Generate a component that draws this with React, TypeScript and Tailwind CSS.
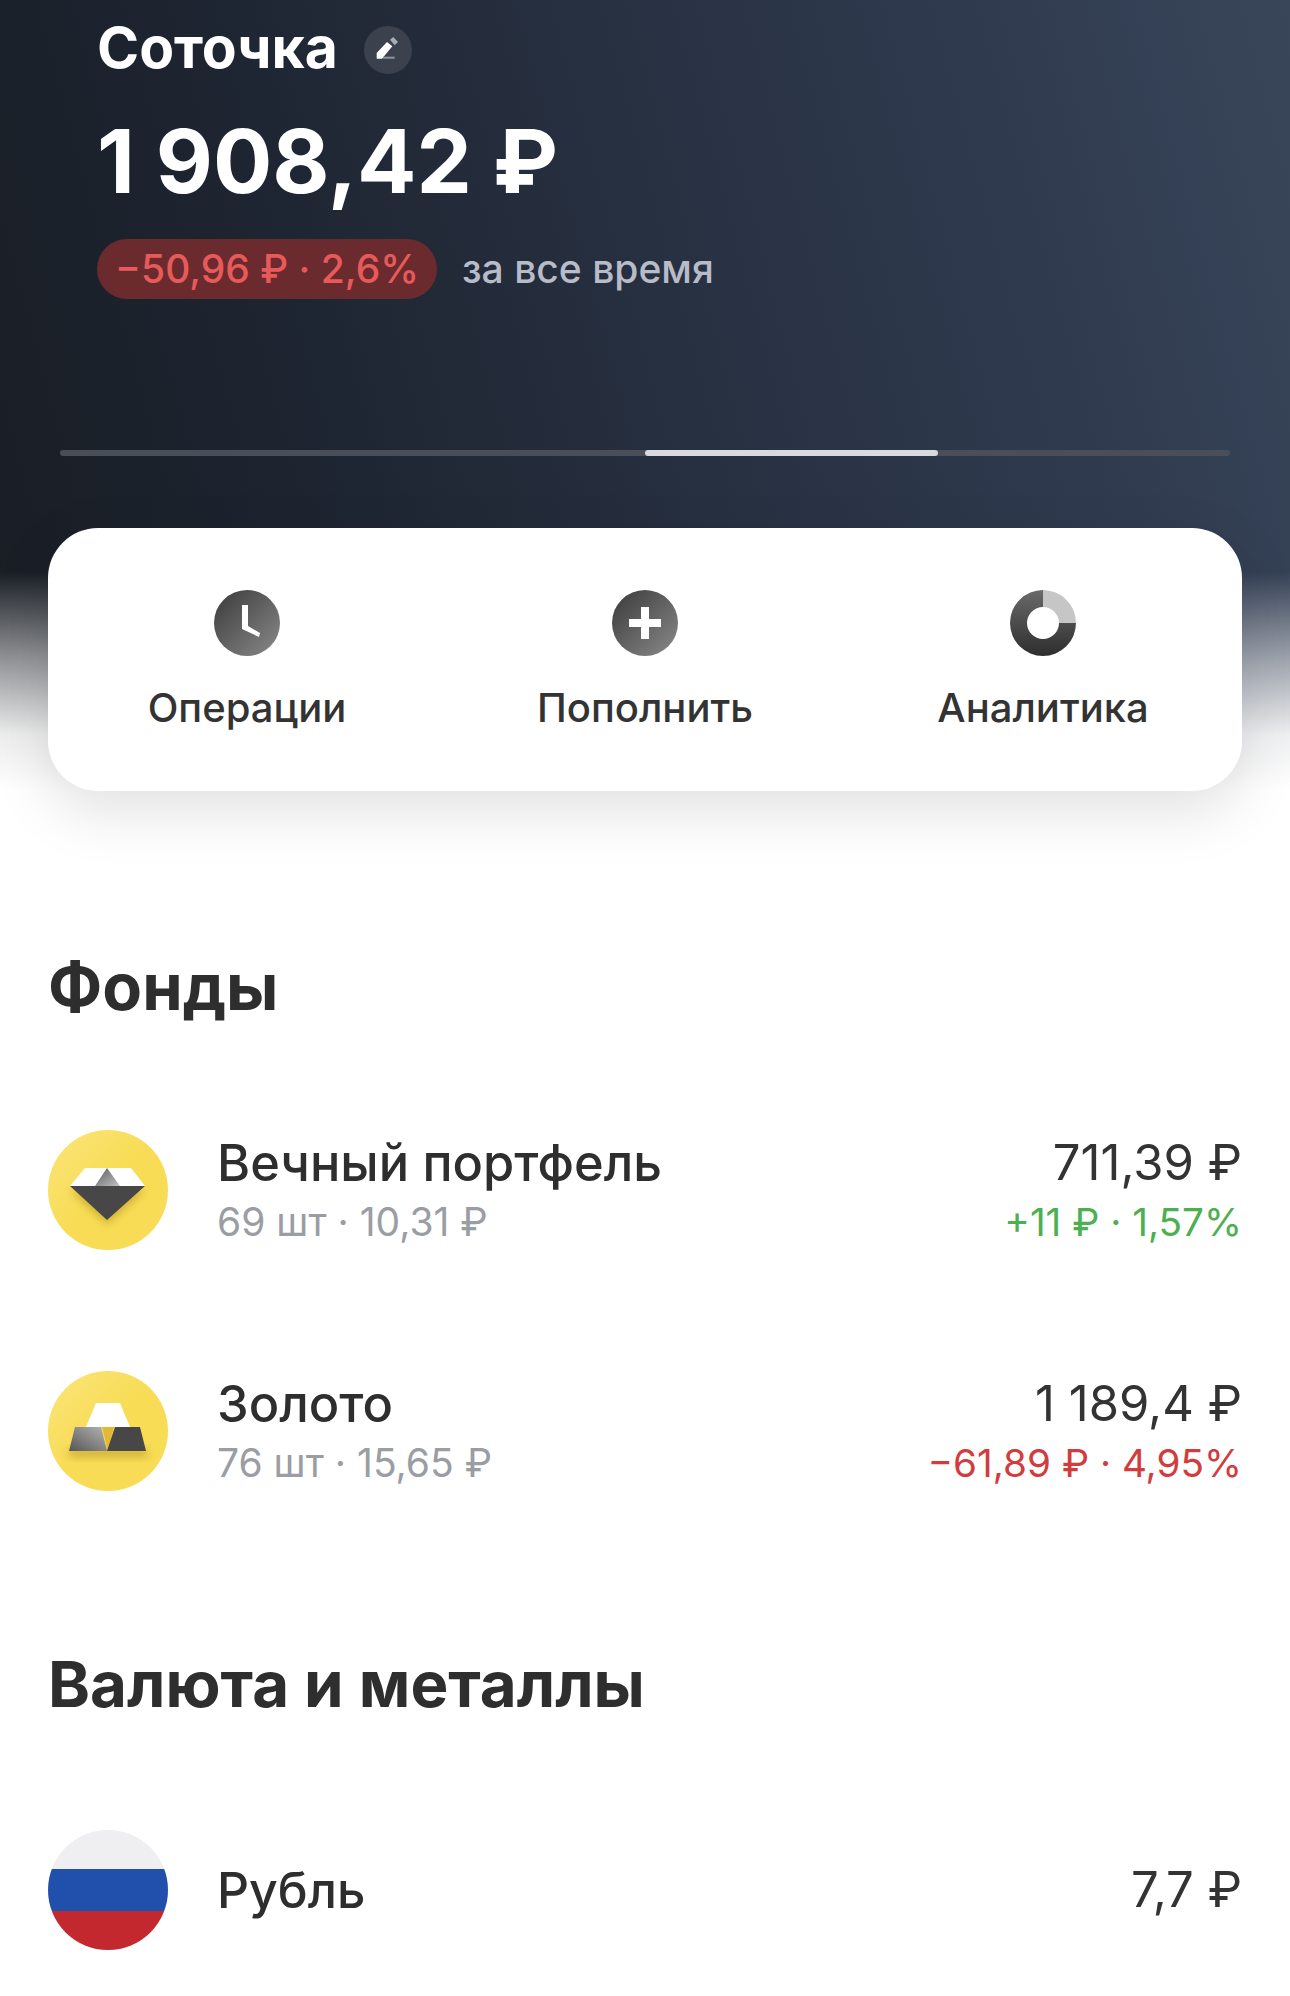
const font = "[font-family:Inter,'Noto_Sans',sans-serif]";

function ClockIcon() {
  return (
    <svg width="66" height="66" viewBox="0 0 66 66">
      <defs>
        <linearGradient id="clockGrad" x1="0" y1="0" x2="1" y2="1">
          <stop offset="0" stopColor="#3a3a3a" />
          <stop offset="1" stopColor="#8a8a8a" />
        </linearGradient>
      </defs>
      <circle cx="33" cy="33" r="33" fill="url(#clockGrad)" />
      <path d="M28 15h6v21l12 7-1 4-17-8z" fill="#fff" />
    </svg>
  );
}

function PlusIcon() {
  return (
    <svg width="66" height="66" viewBox="0 0 66 66">
      <defs>
        <linearGradient id="plusGrad" x1="0" y1="0" x2="1" y2="1">
          <stop offset="0" stopColor="#3a3a3a" />
          <stop offset="1" stopColor="#8a8a8a" />
        </linearGradient>
      </defs>
      <circle cx="33" cy="33" r="33" fill="url(#plusGrad)" />
      <path d="M29 17h8v12h12v8H37v12h-8V37H17v-8h12z" fill="#fff" />
    </svg>
  );
}

function DonutIcon() {
  return (
    <svg width="66" height="66" viewBox="0 0 66 66">
      <defs>
        <linearGradient id="donutGrad" x1="0" y1="0" x2="0" y2="1">
          <stop offset="0" stopColor="#6a6a6a" />
          <stop offset="1" stopColor="#2e2e2e" />
        </linearGradient>
      </defs>
      <path d="M33 0a33 33 0 1 0 33 33H49a16 16 0 1 1-16-16z" fill="url(#donutGrad)" />
      <path d="M33 0a33 33 0 0 1 33 33H49a16 16 0 0 0-16-16z" fill="#c6c6c6" />
    </svg>
  );
}

function DiamondIcon() {
  return (
    <svg width="120" height="120" viewBox="0 0 120 120">
      <defs>
        <linearGradient id="yellowA" x1="0" y1="0" x2="1" y2="1">
          <stop offset="0" stopColor="#fbe57a" />
          <stop offset="0.5" stopColor="#f8dc55" />
          <stop offset="1" stopColor="#f8dc55" />
        </linearGradient>
        <linearGradient id="gemGray" x1="0" y1="0" x2="1" y2="1">
          <stop offset="0" stopColor="#5a5a5a" />
          <stop offset="1" stopColor="#c2c2c2" />
        </linearGradient>
        <filter id="blurA" x="-30%" y="-30%" width="160%" height="160%">
          <feGaussianBlur stdDeviation="4" />
        </filter>
      </defs>
      <circle cx="60" cy="60" r="60" fill="url(#yellowA)" />
      <path d="M22 60h75L59 94z" fill="#a8881a" opacity="0.55" filter="url(#blurA)" />
      <path d="M37 38h46l14 18H22z" fill="#fff" />
      <path d="M59 38l13 18H47z" fill="url(#gemGray)" />
      <path d="M22 56h75L59 90z" fill="#474747" />
    </svg>
  );
}

function GoldIcon() {
  return (
    <svg width="120" height="120" viewBox="0 0 120 120">
      <defs>
        <linearGradient id="yellowB" x1="0" y1="0" x2="1" y2="1">
          <stop offset="0" stopColor="#fbe57a" />
          <stop offset="0.5" stopColor="#f8dc55" />
          <stop offset="1" stopColor="#f8dc55" />
        </linearGradient>
        <linearGradient id="barGray" x1="0" y1="1" x2="1" y2="0">
          <stop offset="0" stopColor="#555" />
          <stop offset="1" stopColor="#b5b5b5" />
        </linearGradient>
        <filter id="blurB" x="-30%" y="-60%" width="160%" height="220%">
          <feGaussianBlur stdDeviation="4" />
        </filter>
      </defs>
      <circle cx="60" cy="60" r="60" fill="url(#yellowB)" />
      <path d="M21 78h78v8H21z" fill="#a8881a" opacity="0.55" filter="url(#blurB)" />
      <path d="M48 32h24l10 24H38z" fill="#fff" />
      <path d="M54 56h12l-6 24z" fill="#e2b935" />
      <path d="M27 56h26l6 24H21z" fill="url(#barGray)" />
      <path d="M67 56h25l6 24H59z" fill="#474747" />
    </svg>
  );
}

function Flag() {
  return (
    <div className="w-[120px] h-[120px] rounded-full overflow-hidden flex flex-col shrink-0">
      <div className="h-[39px] bg-[#efeff1]" />
      <div className="h-[42px] bg-[#2050ac]" />
      <div className="flex-1 bg-[#c4282f]" />
    </div>
  );
}

function Action({ icon, label }: { icon: React.ReactNode; label: string }) {
  return (
    <div className="flex flex-col items-center">
      {icon}
      <span className="mt-[30px] text-[40px] leading-[44px] font-medium text-[#333333]">{label}</span>
    </div>
  );
}

function Row({
  icon,
  title,
  sub,
  value,
  change,
  changeColor,
}: {
  icon: React.ReactNode;
  title: string;
  sub: string;
  value: string;
  change: string;
  changeColor: string;
}) {
  return (
    <div className="flex items-center h-[120px]">
      {icon}
      <div className="ml-[49px] flex-1">
        <div className="-mt-[1px] text-[50.5px] leading-[56px] font-medium text-[#2e2e2e]">{title}</div>
        <div className="mt-[8px] text-[39px] leading-[46px] text-[#9a9da3]">{sub}</div>
      </div>
      <div className="text-right">
        <div className="text-[49px] leading-[56px] text-[#333333]">{value}</div>
        <div className={`mt-[8px] text-[38.7px] leading-[46px] ${changeColor}`}>{change}</div>
      </div>
    </div>
  );
}

export default function App() {
  return (
    <div className={`${font} w-[1290px] h-[1996px] overflow-hidden bg-white`}>
      <div className="h-[800px] px-[48px] pt-[15px] bg-[linear-gradient(180deg,rgba(255,255,255,0)_0px,rgba(255,255,255,0)_572px,rgba(255,255,255,0.5)_655px,rgba(255,255,255,0.92)_735px,#ffffff_790px),linear-gradient(75deg,#191d23_0%,#1d2430_25%,#283142_55%,#303b50_80%,#39465a_100%)]">
        <div className="pl-[49px]">
          <div className="flex items-center">
            <span className="text-[57px] leading-[66px] font-bold text-white">Соточка</span>
            <div className="ml-[26px] mt-[3px] w-[48px] h-[48px] rounded-full bg-[#3b414d]">
              <svg width="48" height="48" viewBox="0 0 48 48">
                <path d="M26 13.7l3.3-2.7 4.7 5-3.3 3.3z" fill="#a9adb4" />
                <path d="M12.7 27L23 16l5.3 4.3L18 32.7h-5.3z" fill="#ffffff" />
                <path d="M19 30.7h11.7v2H19z" fill="#8f939b" />
              </svg>
            </div>
          </div>
          <div className="mt-[32px] text-[88px] leading-[96px] font-bold text-white">1 908,42 ₽</div>
          <div className="mt-[30px] flex items-center">
            <div className="h-[60px] w-[340px] rounded-full bg-[#6b2a2e] flex items-center justify-center text-[39px] font-medium text-[#e85a5a]">
              −50,96 ₽ · 2,6%
            </div>
            <span className="ml-[25px] text-[39px] font-medium text-[#b8bcc8]">за все время</span>
          </div>
        </div>
        <div className="mt-[151px] mx-[12px] h-[6px] rounded-full bg-[#4a4e58] flex">
          <div className="ml-[585px] w-[293px] h-full rounded-full bg-[#d8dadf]" />
        </div>
        <div className="mt-[72px] h-[263px] rounded-[50px] bg-white shadow-[0_20px_60px_rgba(0,0,0,0.12)] grid grid-cols-3 pt-[62px]">
          <Action icon={<ClockIcon />} label="Операции" />
          <Action icon={<PlusIcon />} label="Пополнить" />
          <Action icon={<DonutIcon />} label="Аналитика" />
        </div>
      </div>
      <div className="px-[48px]">
        <h2 className="mt-[149px] text-[65px] leading-[76px] font-bold text-[#2e2e2e]">Фонды</h2>
        <div className="mt-[105px]">
          <Row
            icon={<DiamondIcon />}
            title="Вечный портфель"
            sub="69 шт · 10,31 ₽"
            value="711,39 ₽"
            change="+11 ₽ · 1,57%"
            changeColor="text-[#4caf50]"
          />
        </div>
        <div className="mt-[121px]">
          <Row
            icon={<GoldIcon />}
            title="Золото"
            sub="76 шт · 15,65 ₽"
            value="1 189,4 ₽"
            change="−61,89 ₽ · 4,95%"
            changeColor="text-[#d23c3c]"
          />
        </div>
        <h2 className="mt-[155px] text-[63.6px] leading-[76px] font-bold text-[#2e2e2e]">Валюта и металлы</h2>
        <div className="mt-[108px] flex items-center h-[120px]">
          <Flag />
          <div className="ml-[49px] flex-1 text-[50px] leading-[56px] font-medium text-[#2e2e2e]">Рубль</div>
          <div className="text-[49px] leading-[56px] text-[#333333]">7,7 ₽</div>
        </div>
      </div>
    </div>
  );
}
